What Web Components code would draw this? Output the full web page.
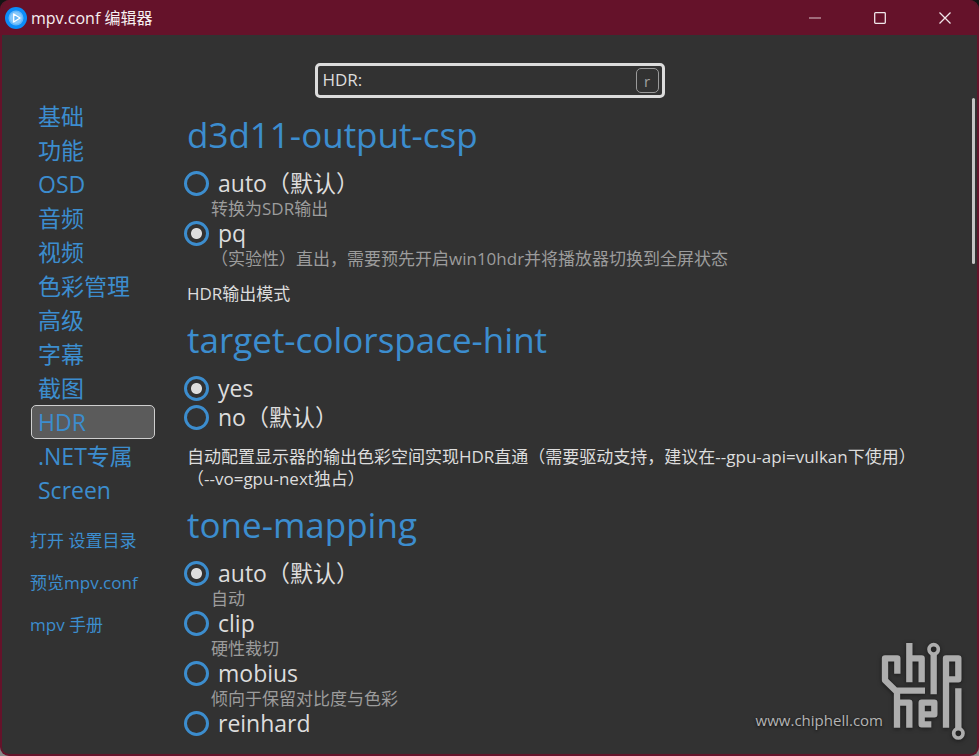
<!DOCTYPE html>
<html lang="zh-CN">
<head>
<meta charset="utf-8">
<title>mpv.conf 编辑器</title>
<style>
  html, body { height: 100%; margin: 0; }
  body {
    --frame: #65122a; --panel: #323232; --accent: #3c8dce; --text: #dddddd; --muted: #9c9c9c;
    background: linear-gradient(#141414 50%, #8a8a8a);
    color: var(--text);
    font: 17px/22px "Open Sans", "Noto Sans CJK SC", sans-serif;
    overflow: hidden;
  }
</style>
</head>
<body>
<conf-window>
  <title-bar slot="title">mpv.conf 编辑器</title-bar>
  <search-box slot="search" value="HDR:"></search-box>
  <side-nav slot="nav"></side-nav>
  <settings-list slot="content"></settings-list>
  <site-mark slot="mark">www.chiphell.com</site-mark>
</conf-window>

<script>
const define = (name, markup, setup) => customElements.define(name, class extends HTMLElement {
  constructor() {
    super();
    const root = this.attachShadow({ mode: 'open' });
    root.innerHTML = '<style>*{box-sizing:border-box}</style>' + markup;
    this.setup = setup;
  }
  connectedCallback() { if (this.setup) this.setup(this.shadowRoot); this.setup = null; }
});

define('conf-window', `
<style>
  :host { display: flex; flex-direction: column; position: relative; height: 100vh; box-sizing: border-box;
    background: var(--panel); border: solid var(--frame); border-width: 0 2px 2px; border-radius: 9px; overflow: hidden; }
  .search { display: flex; justify-content: center; padding-top: 28px; }
  .body { flex: 1; min-height: 0; display: grid; grid-template-columns: 153px minmax(0, 1fr) 3px; padding-right: 2px; }
  .content { overflow: hidden; padding: 13px 20px 0 32px; }
  .thumb { height: 166px; border-radius: 2px; background: #c4c4c4; }
  .mark { position: absolute; right: 0; bottom: 9px; }
</style>
<slot name="title"></slot>
<div class="search"><slot name="search"></slot></div>
<div class="body">
  <slot name="nav"></slot>
  <main class="content"><slot name="content"></slot></main>
  <div class="thumb"></div>
</div>
<div class="mark"><slot name="mark"></slot></div>`);

define('title-bar', `
<style>
  :host { display: flex; align-items: center; height: 35px; padding-left: 3px; background: var(--frame); color: #f6eef0; font-size: 16px; }
  .logo { margin-right: 4px; }
  .name { flex: 1; }
  button { width: 65px; height: 35px; padding: 0; border: 0; background: none; color: #f0e6e9; display: grid; place-items: center; }
  svg { display: block; }
</style>
<svg class="logo" width="22" height="22" viewBox="0 0 22 22"><circle cx="11" cy="11" r="11" fill="#0c8cf8"/><circle cx="11" cy="11" r="7.5" fill="#62b7fa"/><circle cx="11" cy="11" r="6" fill="#86c8fb"/><path d="M8.7 7 15 11l-6.3 4z" fill="#66b6f5" stroke="#fff" stroke-width="1.3" stroke-linejoin="round"/></svg>
<span class="name"><slot></slot></span>
<button aria-label="最小化"><svg width="12" height="12"><path d="M0 6h12" stroke="#b58a97" stroke-width="1.6"/></svg></button>
<button aria-label="最大化"><svg width="12" height="12"><rect x=".7" y=".7" width="10.6" height="10.6" rx=".8" fill="none" stroke="currentColor" stroke-width="1.3"/></svg></button>
<button aria-label="关闭"><svg width="12" height="12"><path d="M.5.5l11 11M11.5.5l-11 11" stroke="currentColor" stroke-width="1.3"/></svg></button>`);

define('search-box', `
<style>
  :host { display: flex; align-items: center; gap: 4px; box-sizing: border-box; width: 350px; max-width: 100%; height: 35px;
    padding: 0 3px 0 5px; border: 3px solid #dcdcdc; border-radius: 5px; }
  input { flex: 1; min-width: 0; height: 24px; padding: 0 0 2px; border: 0; outline: 0; background: none; color: var(--text); font: inherit; }
  button { width: 23px; height: 25px; padding: 0; border: 1px solid #9a9a9a; border-radius: 5px; background: none; color: #a0a0a0; font: inherit; font-size: 15px; line-height: 22px; }
</style>
<input type="text" aria-label="搜索"><button aria-label="清除">r</button>`,
function (root) { root.querySelector('input').value = this.getAttribute('value'); });

define('side-nav', `
<style>
  :host { display: block; padding: 1px 0 0 28px; }
  a { color: var(--accent); text-decoration: none; }
  nav { display: flex; flex-direction: column; margin-left: 1px; font-size: 23px; line-height: 32px; }
  nav a { height: 34px; padding-left: 6px; border: 1px solid transparent; border-radius: 5px; }
  nav a[aria-current] { background: #5b5b5b; border-color: #cfcfcf; }
  .links { display: flex; flex-direction: column; align-items: flex-start; gap: 20px; margin-top: 23px; }
</style>
<nav></nav>
<div class="links"><a href="#dir">打开 设置目录</a><a href="#preview">预览mpv.conf</a><a href="#manual">mpv 手册</a></div>`,
function (root) {
  root.querySelector('nav').innerHTML = ['基础', '功能', 'OSD', '音频', '视频', '色彩管理', '高级', '字幕', '截图', 'HDR', '.NET专属', 'Screen']
    .map(t => `<a href="#${t}"${t === 'HDR' ? ' aria-current="page"' : ''}>${t}</a>`).join('');
});

define('conf-setting', `
<style>
  :host { display: block; }
  h2 { margin: 0 0 10px; color: var(--accent); font-size: 35px; line-height: 48px; font-weight: 400; }
  fieldset { margin: 0; padding: 0; border: 0; min-width: 0; }
  label { display: flex; align-items: center; gap: 9px; height: 29px; margin-left: -3px; font-size: 23px; line-height: 29px; width: fit-content; }
  input { appearance: none; width: 25px; height: 25px; margin: 0; border: 3px solid var(--accent); border-radius: 50%; }
  input:checked { background: radial-gradient(circle, #dddddd 5px, transparent 6px); }
  .hint { margin-left: 24px; color: var(--muted); line-height: 21px; }
  p { margin: 14px 0 0; white-space: pre-line; }
</style>
<fieldset aria-labelledby="name"><h2 id="name"></h2><div class="options"></div></fieldset><p></p>`,
function (root) {
  const { name, options, value, note } = this.data;
  root.querySelector('h2').textContent = name;
  root.querySelector('p').textContent = note;
  root.querySelector('.options').innerHTML = options.map(([text, hint], i) =>
    `<label><input type="radio" name="v"${i === value ? ' checked' : ''}${hint ? ` aria-describedby="h${i}"` : ''}><span>${text}</span></label>` +
    (hint ? `<div class="hint" id="h${i}">${hint}</div>` : '')).join('');
});

define('settings-list', `
<style>:host { display: flex; flex-direction: column; gap: 11px; }</style>`,
function (root) {
  [
    { name: 'd3d11-output-csp', value: 1, note: 'HDR输出模式',
      options: [['auto（默认）', '转换为SDR输出'], ['pq', '（实验性）直出，需要预先开启win10hdr并将播放器切换到全屏状态']] },
    { name: 'target-colorspace-hint', value: 0,
      note: '自动配置显示器的输出色彩空间实现HDR直通（需要驱动支持，建议在--gpu-api=vulkan下使用）\n（--vo=gpu-next独占）',
      options: [['yes'], ['no（默认）']] },
    { name: 'tone-mapping', value: 0, note: '',
      options: [['auto（默认）', '自动'], ['clip', '硬性裁切'], ['mobius', '倾向于保留对比度与色彩'], ['reinhard']] }
  ].forEach(data => {
    const el = document.createElement('conf-setting');
    el.data = data;
    root.append(el);
  });
});

define('site-mark', `
<style>
  :host { display: flex; align-items: flex-start; color: #b4b4b4; font: 15px/20px "Open Sans", sans-serif; }
  span { margin: 75px -13px 0 0; text-shadow: 0 1px 3px #111; }
  svg { display: block; filter: drop-shadow(0 1px 2px #181818); margin-right: -2px; }
</style>
<span><slot></slot></span>
<svg width="109" height="110" viewBox="0 0 327 330" fill="none" stroke="#adadad" stroke-width="19" stroke-linejoin="round">
  <path d="M82 116V70H45V136L81 171V278M73 167H165"/>
  <path d="M118 24V142M118 70H155V142M191 58V178M228 278V70H265V133H228"/>
  <path d="M81 203H118V278M184 268H155V203H193V238H155M265 160V284"/>
  <circle cx="191" cy="43" r="14" stroke-width="11"/><circle cx="265" cy="295" r="14" stroke-width="11"/>
</svg>`);
</script>
</body>
</html>
